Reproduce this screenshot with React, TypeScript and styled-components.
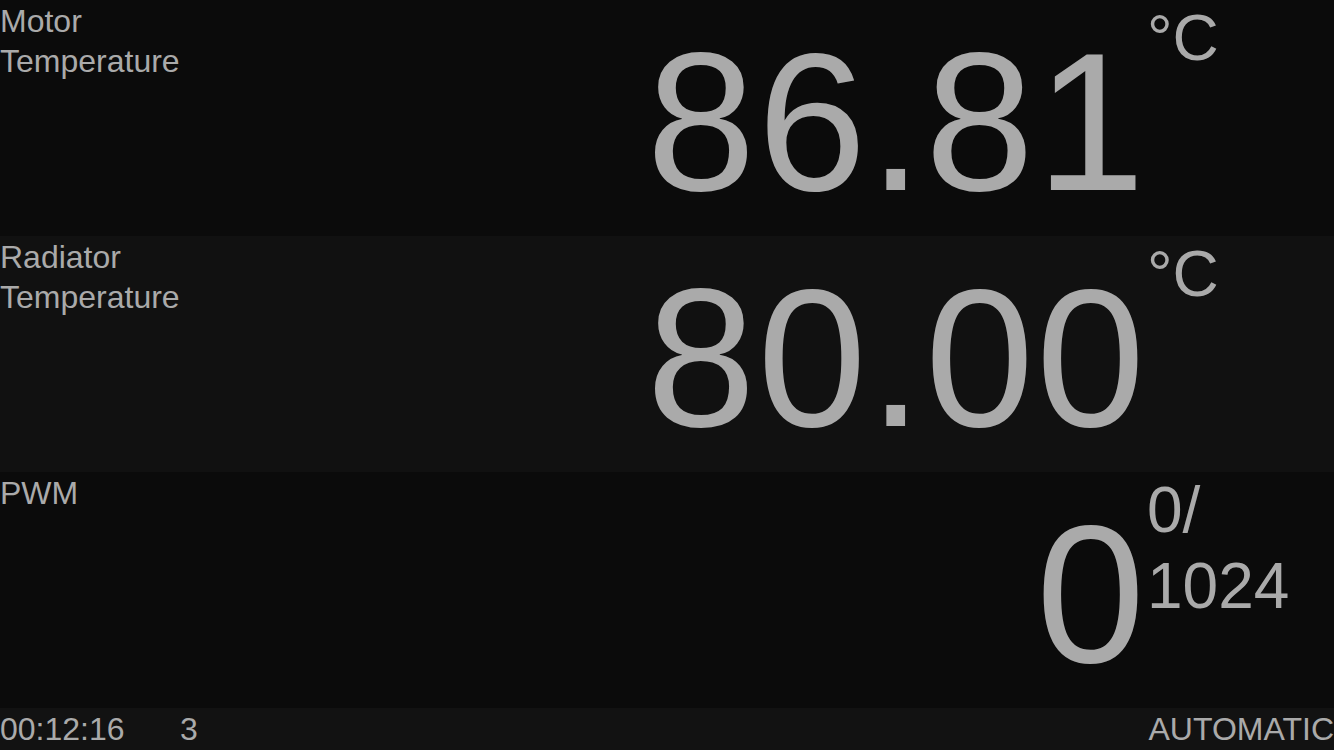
import React from 'react';
import styled, {createGlobalStyle} from 'styled-components';

const GlobalStyle = createGlobalStyle`
    html, body {
        margin: 0;
        padding: 0;
        background: #0b0b0b;
        overflow: hidden;
    }
    body {
        font-family: "Liberation Sans", Arial, Helvetica, sans-serif;
        color: #aaaaaa;
    }
`;

const Screen = styled.div`
    width: 1334px;
    height: 750px;
    display: flex;
    flex-direction: column;
`;

const Row = styled.section<{ $alt?: boolean }>`
    height: 236px;
    display: flex;
    align-items: flex-start;
    background: ${p => (p.$alt ? '#111111' : '#0b0b0b')};
`;

const Label = styled.div`
    flex: 1;
    max-width: 200px;
    padding-top: 1px;
    font-size: 32px;
    line-height: 40px;
`;

const Spacer = styled.div`
    flex: 1;
`;

const Value = styled.div`
    font-size: 196px;
    line-height: 196px;
    letter-spacing: 2px;
    padding-top: 25px;
    white-space: nowrap;
`;

const Unit = styled.div`
    width: 187px;
    font-size: 64px;
    line-height: 76px;
`;

const Footer = styled.footer`
    height: 42px;
    display: flex;
    align-items: center;
    background: #121212;
    font-size: 32px;
    line-height: 42px;
`;

const Clock = styled.span`
    width: 180px;
`;

const Mode = styled.span`
    margin-left: auto;
    white-space: nowrap;
`;

const readings = [
    {label: 'Motor Temperature', value: '86.81', unit: <>°C</>},
    {label: 'Radiator Temperature', value: '80.00', unit: <>°C</>},
    {label: 'PWM', value: '0', unit: <>0/<wbr />1024</>},
];

const App: React.FC = () => {
    return (
        <Screen>
            <GlobalStyle />
            {readings.map((r, i) => (
                <Row key={r.label} $alt={i % 2 === 1}>
                    <Label>{r.label}</Label>
                    <Spacer />
                    <Value>{r.value}</Value>
                    <Unit>{r.unit}</Unit>
                </Row>
            ))}
            <Footer>
                <Clock>00:12:16</Clock>
                <span>3</span>
                <Mode>AUTOMATIC</Mode>
            </Footer>
        </Screen>
    );
};

export default App;
